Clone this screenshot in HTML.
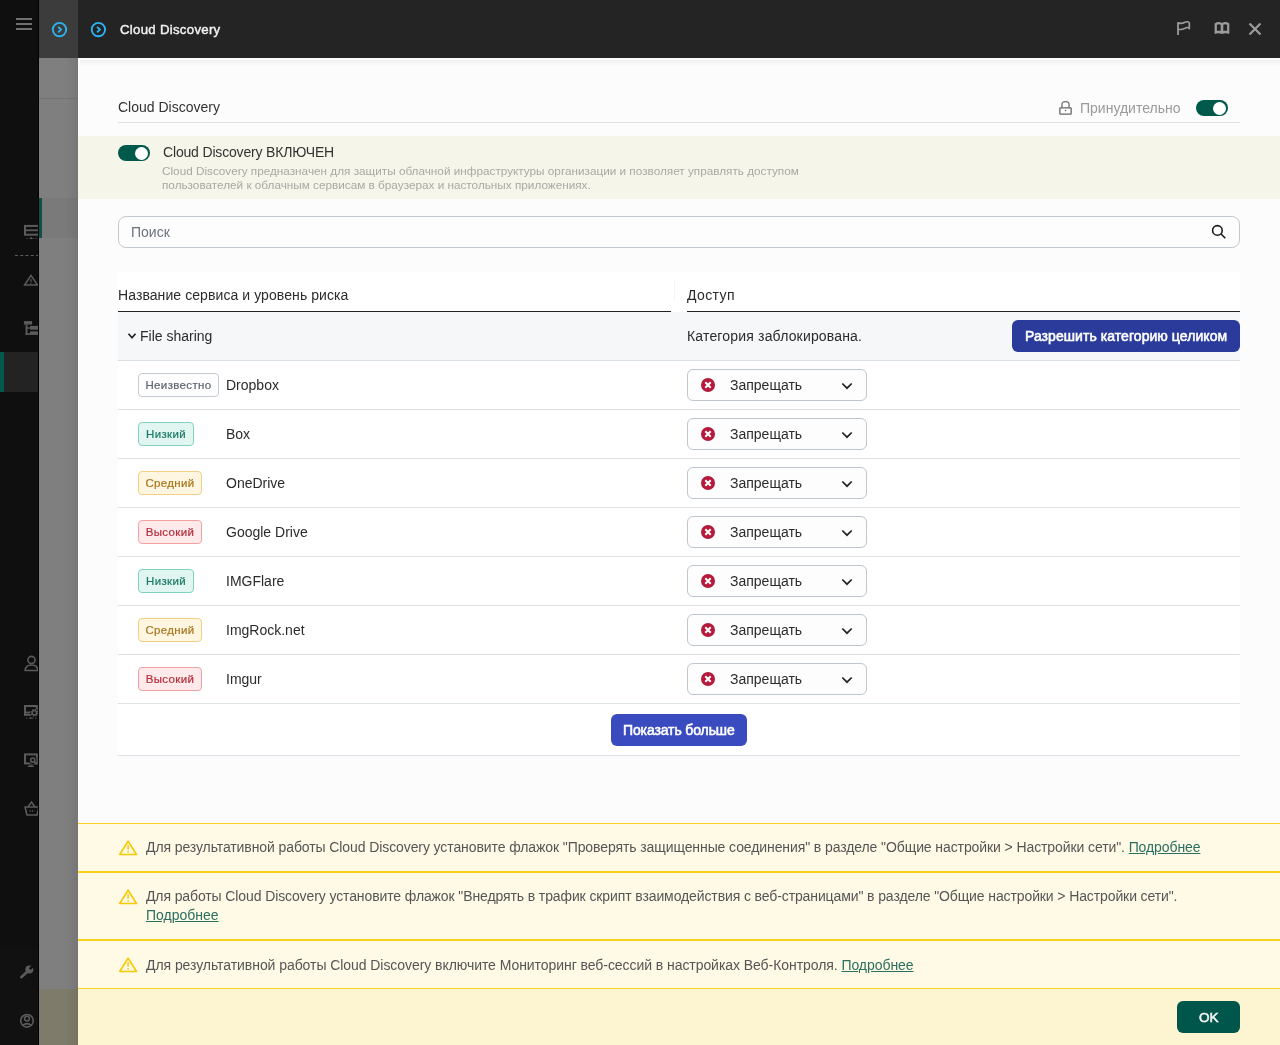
<!DOCTYPE html>
<html><head><meta charset="utf-8">
<style>
*{box-sizing:border-box;margin:0;padding:0}
html,body{width:1280px;height:1045px;overflow:hidden;background:#0f0f0f;font-family:"Liberation Sans",sans-serif;}
.abs{position:absolute}
svg{overflow:visible}
.t{position:absolute;white-space:nowrap;line-height:1;will-change:transform}
</style></head>
<body>
<div class="abs" style="left:0px;top:0px;width:39px;height:1045px;background:#0f0f0f;"></div>
<div class="abs" style="left:0px;top:949px;width:39px;height:96px;background:#111111;"></div>
<div class="abs" style="left:16px;top:18px;width:16px;height:2px;background:#6f6f6f;"></div>
<div class="abs" style="left:16px;top:23px;width:16px;height:2px;background:#6f6f6f;"></div>
<div class="abs" style="left:16px;top:28px;width:16px;height:2px;background:#6f6f6f;"></div>
<div class="abs" style="left:0px;top:352px;width:39px;height:40px;background:#232323;"></div>
<div class="abs" style="left:0px;top:352px;width:4px;height:40px;background:#00594b;"></div>
<div class="abs" style="left:15px;top:255px;width:24px;height:1px;border-top:1px dashed #5a5a5a"></div>
<svg class="abs" style="left:22px;top:222px" width="17" height="18" viewBox="0 0 17 18"><rect x="3" y="3.9" width="13.9" height="8.8" fill="none" stroke="#5b5b5b" stroke-width="2"/><line x1="3" y1="8.3" x2="17" y2="8.3" stroke="#5b5b5b" stroke-width="1.8"/><line x1="4.5" y1="16.5" x2="17" y2="16.5" stroke="#5b5b5b" stroke-width="0.9" stroke-dasharray="1.2 1.8"/><rect x="8.2" y="15.3" width="1.8" height="1.8" fill="#5b5b5b"/></svg>
<svg class="abs" style="left:22px;top:272px" width="17" height="16" viewBox="0 0 17 16"><path d="M9 3.4 L15.5 13.1 L2.6 13.1 Z" fill="none" stroke="#5b5b5b" stroke-width="1.5" stroke-linejoin="miter"/><line x1="9" y1="7" x2="9" y2="10" stroke="#5b5b5b" stroke-width="1.2"/><circle cx="9" cy="11.4" r="0.6" fill="#5b5b5b"/></svg>
<svg class="abs" style="left:22px;top:319px" width="17" height="17" viewBox="0 0 17 17"><rect x="1.9" y="2.1" width="8.2" height="3.5" fill="#5b5b5b"/><rect x="3.6" y="5.6" width="1.9" height="10.3" fill="#5b5b5b"/><rect x="3.6" y="8.3" width="4.4" height="1.4" fill="#5b5b5b"/><rect x="3.6" y="14.2" width="4.4" height="1.7" fill="#5b5b5b"/><rect x="8" y="6.9" width="9" height="3.8" fill="#5b5b5b"/><rect x="8" y="12.4" width="9" height="3.5" fill="#5b5b5b"/></svg>
<svg class="abs" style="left:22px;top:654px" width="17" height="18" viewBox="0 0 17 18"><circle cx="9.5" cy="6" r="3.6" fill="none" stroke="#5b5b5b" stroke-width="1.6"/><path d="M3 16.5 Q3.5 11 9.5 11 Q15.5 11 16 16.5 Z" fill="none" stroke="#5b5b5b" stroke-width="1.6" stroke-linejoin="round"/></svg>
<svg class="abs" style="left:22px;top:702px" width="17" height="18" viewBox="0 0 17 18"><rect x="3" y="4" width="11.8" height="8.8" fill="none" stroke="#5b5b5b" stroke-width="2"/><line x1="2" y1="10.4" x2="9" y2="10.4" stroke="#5b5b5b" stroke-width="1.8"/><circle cx="12.4" cy="10.75" r="4.3" fill="#0f0f0f"/><circle cx="12.4" cy="10.75" r="2.2" fill="none" stroke="#5b5b5b" stroke-width="1.5"/><circle cx="12.4" cy="10.75" r="3.3" fill="none" stroke="#5b5b5b" stroke-width="1.3" stroke-dasharray="1.3 1.3"/><line x1="4" y1="16.1" x2="17" y2="16.1" stroke="#5b5b5b" stroke-width="0.9" stroke-dasharray="1.2 1.8"/><rect x="7.9" y="15.2" width="1.7" height="1.7" fill="#5b5b5b"/></svg>
<svg class="abs" style="left:22px;top:751px" width="17" height="18" viewBox="0 0 17 18"><rect x="3" y="3.4" width="11.8" height="9" fill="none" stroke="#5b5b5b" stroke-width="2"/><circle cx="10.75" cy="9" r="3.9" fill="#0f0f0f"/><circle cx="10.75" cy="9" r="2.1" fill="none" stroke="#5b5b5b" stroke-width="1.5"/><line x1="12.3" y1="10.6" x2="14.9" y2="13.2" stroke="#5b5b5b" stroke-width="1.5"/><path d="M5.4 16.1 L7.2 14.2 H10.5 L12.4 16.1 Z" fill="#5b5b5b"/></svg>
<svg class="abs" style="left:22px;top:799px" width="17" height="18" viewBox="0 0 17 18"><path d="M3 8 H17 L15 16 H5 Z" fill="none" stroke="#5b5b5b" stroke-width="1.6" stroke-linejoin="round"/><path d="M6 8 L9.5 3 L13 8" fill="none" stroke="#5b5b5b" stroke-width="1.5"/><line x1="7.5" y1="12" x2="12.5" y2="12" stroke="#5b5b5b" stroke-width="1.4" stroke-dasharray="1.2 1.2"/></svg>
<svg class="abs" style="left:10px;top:955px" width="30" height="30" viewBox="0 0 30 30"><line x1="11.3" y1="22.2" x2="17.5" y2="16.5" stroke="#5b5b5b" stroke-width="2.6" stroke-linecap="round"/><circle cx="19.3" cy="14.6" r="4" fill="#5b5b5b"/><line x1="19.8" y1="14.1" x2="24.5" y2="9.4" stroke="#0f0f0f" stroke-width="2.6"/></svg>
<svg class="abs" style="left:10px;top:1005px" width="30" height="30" viewBox="0 0 30 30"><circle cx="17" cy="15.8" r="6.3" fill="none" stroke="#5b5b5b" stroke-width="1.6"/><circle cx="17" cy="13.6" r="2.4" fill="none" stroke="#5b5b5b" stroke-width="1.5"/><path d="M12.5 20.5 Q17 16.8 21.5 20.5" fill="none" stroke="#5b5b5b" stroke-width="1.5"/></svg>
<div class="abs" style="left:38px;top:0px;width:1px;height:1045px;background:#000;"></div>
<div class="abs" style="left:39px;top:0px;width:39px;height:1045px;background:#7f7f7f;"></div>
<div class="abs" style="left:39px;top:98px;width:39px;height:1px;background:#747474;"></div>
<div class="abs" style="left:39px;top:198px;width:39px;height:40px;background:#7a7a7a;"></div>
<div class="abs" style="left:39px;top:198px;width:3px;height:40px;background:#0d5045;"></div>
<div class="abs" style="left:39px;top:989px;width:39px;height:56px;background:#7f7b6a;"></div>
<div class="abs" style="left:66px;top:58px;width:12px;height:987px;background:linear-gradient(to right,rgba(0,0,0,0),rgba(0,0,0,0.07))"></div>
<div class="abs" style="left:39px;top:0px;width:39px;height:58px;background:#3c3c3c;"></div>
<svg class="abs" style="left:50px;top:20px" width="18" height="18" viewBox="0 0 18 18"><circle cx="9.5" cy="9.600000000000001" r="6.7" fill="none" stroke="#2bb4f2" stroke-width="1.9"/><path d="M8.2 6.800000000000002 L11.0 9.600000000000001 L8.2 12.400000000000002" fill="none" stroke="#2bb4f2" stroke-width="1.9"/></svg>
<div class="abs" style="left:78px;top:0px;width:1202px;height:58px;background:#242424;"></div>
<svg class="abs" style="left:89px;top:20px" width="18" height="18" viewBox="0 0 18 18"><circle cx="9.400000000000006" cy="9.600000000000001" r="6.7" fill="none" stroke="#2bb4f2" stroke-width="1.9"/><path d="M8.100000000000005 6.800000000000002 L10.900000000000006 9.600000000000001 L8.100000000000005 12.400000000000002" fill="none" stroke="#2bb4f2" stroke-width="1.9"/></svg>
<div class="t" style="left:119.7px;top:23.08px;font-size:13.2px;color:#f0f0f0;font-weight:normal;letter-spacing:0.3px;-webkit-text-stroke:0.45px #f0f0f0;">Cloud Discovery</div>
<svg class="abs" style="left:1172px;top:18px" width="24" height="20" viewBox="0 0 24 20"><path d="M6 16.9 V4.3" stroke="#9c9c9c" stroke-width="1.8" fill="none"/><path d="M6 4.9 C8.5 5.8, 11 5.3, 13 4.3 C14.8 3.5, 16.8 3.4, 17.3 5 V10.6 C16.5 9.1, 14.5 9.3, 13 10.2 C11 11.3, 8.5 11.8, 6 11.3" fill="none" stroke="#9c9c9c" stroke-width="1.7" stroke-linejoin="round"/></svg>
<svg class="abs" style="left:1210px;top:18px" width="24" height="20" viewBox="0 0 24 20"><path fill-rule="evenodd" fill="#9c9c9c" d="M4.6 15.9 V5.4 Q8.5 3 12 5 Q15.5 3 19.3 5.4 V15.9 Q15.5 14.6 12 15.9 Q8.5 14.6 4.6 15.9 Z M6.9 12.8 V6.7 Q8.8 5.9 10.7 6.7 V12.8 Z M13.3 12.8 V6.7 Q15.2 5.9 17.1 6.7 V12.8 Z"/></svg>
<svg class="abs" style="left:1246px;top:20px" width="18" height="18" viewBox="0 0 18 18"><path d="M3.5 3.5 L14.5 14.5 M14.5 3.5 L3.5 14.5" stroke="#9c9c9c" stroke-width="2.2" stroke-linecap="butt"/></svg>
<div class="abs" style="left:78px;top:58px;width:1202px;height:765px;background:#fcfcfc;"></div>
<div class="abs" style="left:80px;top:59px;width:1200px;height:7px;background:linear-gradient(to bottom,rgba(0,0,0,0.0),rgba(0,0,0,0.045) 25%,rgba(0,0,0,0))"></div>
<div class="t" style="left:118px;top:100.20px;font-size:14px;color:#333333;font-weight:normal;">Cloud Discovery</div>
<svg class="abs" style="left:1057px;top:100px" width="18" height="18" viewBox="0 0 18 18"><path d="M4.95 7.8 V4.6 Q4.95 1.55 8.5 1.55 Q12.05 1.55 12.05 4.6 V7.8" fill="none" stroke="#707070" stroke-width="1.3"/><rect x="2.85" y="7.85" width="11.3" height="6.3" rx="0.6" fill="none" stroke="#666" stroke-width="1.3"/><circle cx="8.5" cy="10.5" r="0.75" fill="#666"/></svg>
<div class="t" style="left:1080.3px;top:100.70px;font-size:14px;color:#9a9a9a;font-weight:normal;">Принудительно</div>
<div class="abs" style="left:1196px;top:100px;width:32px;height:16px;border-radius:8px;background:#00594b"></div><div class="abs" style="left:1212.5px;top:101.5px;width:13px;height:13px;border-radius:50%;background:#fff"></div>
<div class="abs" style="left:118px;top:122px;width:1122px;height:1px;background:#e0e0e0;"></div>
<div class="abs" style="left:78px;top:136px;width:1202px;height:63px;background:#f6f5e9;"></div>
<div class="abs" style="left:118px;top:145px;width:32px;height:16px;border-radius:8px;background:#00594b"></div><div class="abs" style="left:134.5px;top:146.5px;width:13px;height:13px;border-radius:50%;background:#fff"></div>
<div class="t" style="left:162.5px;top:145.10px;font-size:14px;color:#333333;font-weight:normal;letter-spacing:-0.17px;">Cloud Discovery ВКЛЮЧЕН</div>
<div class="t" style="left:162px;top:165.31px;font-size:11.75px;color:#a9a9a4;font-weight:normal;">Cloud Discovery предназначен для защиты облачной инфраструктуры организации и позволяет управлять доступом</div>
<div class="t" style="left:162px;top:179.21px;font-size:11.75px;color:#a9a9a4;font-weight:normal;">пользователей к облачным сервисам в браузерах и настольных приложениях.</div>
<div class="abs" style="left:118px;top:216px;width:1122px;height:32px;border:1px solid #c3c9d0;border-radius:8px;background:#fdfdfd"></div>
<div class="t" style="left:131px;top:225.10px;font-size:14px;color:#6b737c;font-weight:normal;">Поиск</div>
<svg class="abs" style="left:1209px;top:222px" width="20" height="20" viewBox="0 0 20 20"><circle cx="8.4" cy="8.4" r="4.8" fill="none" stroke="#1a1a1a" stroke-width="1.6"/><line x1="11.8" y1="11.8" x2="16.3" y2="16.3" stroke="#1a1a1a" stroke-width="1.6"/></svg>
<div class="abs" style="left:118px;top:272px;width:1122px;height:483px;background:#ffffff;"></div>
<div class="t" style="left:118px;top:288.40px;font-size:14px;color:#2b2b2b;font-weight:normal;letter-spacing:0.08px;">Название сервиса и уровень риска</div>
<div class="t" style="left:686.5px;top:288.40px;font-size:14px;color:#2b2b2b;font-weight:normal;letter-spacing:0.4px;">Доступ</div>
<div class="abs" style="left:674px;top:280px;width:1px;height:20px;background:#f4f4f4;"></div>
<div class="abs" style="left:118px;top:311px;width:553px;height:1px;background:#222;"></div>
<div class="abs" style="left:687px;top:311px;width:553px;height:1px;background:#222;"></div>
<div class="abs" style="left:118px;top:312px;width:1122px;height:48px;background:#f6f7f9;"></div>
<div class="abs" style="left:118px;top:360px;width:1122px;height:1px;background:#d9dee5;"></div>
<svg class="abs" style="left:126px;top:330px" width="12" height="12" viewBox="0 0 12 12"><path d="M2.5 3.8 L6 7.8 L9.5 3.8" fill="none" stroke="#222" stroke-width="1.7"/></svg>
<div class="t" style="left:139.7px;top:328.90px;font-size:14px;color:#2b2b2b;font-weight:normal;">File sharing</div>
<div class="t" style="left:686.8px;top:328.60px;font-size:14px;color:#2b2b2b;font-weight:normal;letter-spacing:0.17px;">Категория заблокирована.</div>
<div class="abs" style="left:1012px;top:320px;width:228px;height:32px;border-radius:6px;background:#2a3b9b"></div>
<div class="t" style="left:1024.5px;top:329.30px;font-size:14px;color:#ffffff;font-weight:normal;letter-spacing:0.06px;-webkit-text-stroke:0.55px #fff;">Разрешить категорию целиком</div>
<div class="abs" style="left:138px;top:373px;width:81px;height:24px;border:1px solid #c5cbd3;border-radius:4px;background:#fdfdfd;color:#5f6670;font-size:11.5px;font-weight:normal;line-height:22px;text-align:center;letter-spacing:0.35px;-webkit-text-stroke:0.2px #5f6670;will-change:transform">Неизвестно</div>
<div class="t" style="left:225.8px;top:377.50px;font-size:14px;color:#2b2b2b;font-weight:normal;">Dropbox</div>
<div class="abs" style="left:687px;top:369px;width:180px;height:32px;border:1px solid #bfc5cc;border-radius:6px;background:#fdfdfd"></div>
<svg class="abs" style="left:700px;top:377px" width="16" height="16" viewBox="0 0 16 16"><circle cx="8" cy="8" r="7" fill="#b51a3c"/><path d="M5.3 5.3 L10.7 10.7 M10.7 5.3 L5.3 10.7" stroke="#fff" stroke-width="2"/></svg>
<div class="t" style="left:730.3px;top:378.10px;font-size:14px;color:#2b2b2b;font-weight:normal;">Запрещать</div>
<svg class="abs" style="left:840px;top:378.5px" width="14" height="14" viewBox="0 0 14 14"><path d="M2.3 4.5 L7 9.2 L11.7 4.5" fill="none" stroke="#222" stroke-width="1.7"/></svg>
<div class="abs" style="left:118px;top:409px;width:1122px;height:1px;background:#dde2e8;"></div>
<div class="abs" style="left:138px;top:422px;width:56px;height:24px;border:1px solid #7fd3be;border-radius:4px;background:#e2f6f1;color:#1c7a66;font-size:11.5px;font-weight:normal;line-height:22px;text-align:center;letter-spacing:0.35px;-webkit-text-stroke:0.2px #1c7a66;will-change:transform">Низкий</div>
<div class="t" style="left:225.8px;top:426.50px;font-size:14px;color:#2b2b2b;font-weight:normal;">Box</div>
<div class="abs" style="left:687px;top:418px;width:180px;height:32px;border:1px solid #bfc5cc;border-radius:6px;background:#fdfdfd"></div>
<svg class="abs" style="left:700px;top:426px" width="16" height="16" viewBox="0 0 16 16"><circle cx="8" cy="8" r="7" fill="#b51a3c"/><path d="M5.3 5.3 L10.7 10.7 M10.7 5.3 L5.3 10.7" stroke="#fff" stroke-width="2"/></svg>
<div class="t" style="left:730.3px;top:427.10px;font-size:14px;color:#2b2b2b;font-weight:normal;">Запрещать</div>
<svg class="abs" style="left:840px;top:427.5px" width="14" height="14" viewBox="0 0 14 14"><path d="M2.3 4.5 L7 9.2 L11.7 4.5" fill="none" stroke="#222" stroke-width="1.7"/></svg>
<div class="abs" style="left:118px;top:458px;width:1122px;height:1px;background:#dde2e8;"></div>
<div class="abs" style="left:138px;top:471px;width:64px;height:24px;border:1px solid #f1d083;border-radius:4px;background:#fff6e1;color:#a8761c;font-size:11.5px;font-weight:normal;line-height:22px;text-align:center;letter-spacing:0.35px;-webkit-text-stroke:0.2px #a8761c;will-change:transform">Средний</div>
<div class="t" style="left:225.8px;top:475.50px;font-size:14px;color:#2b2b2b;font-weight:normal;">OneDrive</div>
<div class="abs" style="left:687px;top:467px;width:180px;height:32px;border:1px solid #bfc5cc;border-radius:6px;background:#fdfdfd"></div>
<svg class="abs" style="left:700px;top:475px" width="16" height="16" viewBox="0 0 16 16"><circle cx="8" cy="8" r="7" fill="#b51a3c"/><path d="M5.3 5.3 L10.7 10.7 M10.7 5.3 L5.3 10.7" stroke="#fff" stroke-width="2"/></svg>
<div class="t" style="left:730.3px;top:476.10px;font-size:14px;color:#2b2b2b;font-weight:normal;">Запрещать</div>
<svg class="abs" style="left:840px;top:476.5px" width="14" height="14" viewBox="0 0 14 14"><path d="M2.3 4.5 L7 9.2 L11.7 4.5" fill="none" stroke="#222" stroke-width="1.7"/></svg>
<div class="abs" style="left:118px;top:507px;width:1122px;height:1px;background:#dde2e8;"></div>
<div class="abs" style="left:138px;top:520px;width:64px;height:24px;border:1px solid #f4a1a4;border-radius:4px;background:#feeaea;color:#b52f3d;font-size:11.5px;font-weight:normal;line-height:22px;text-align:center;letter-spacing:0.35px;-webkit-text-stroke:0.2px #b52f3d;will-change:transform">Высокий</div>
<div class="t" style="left:225.8px;top:524.50px;font-size:14px;color:#2b2b2b;font-weight:normal;">Google Drive</div>
<div class="abs" style="left:687px;top:516px;width:180px;height:32px;border:1px solid #bfc5cc;border-radius:6px;background:#fdfdfd"></div>
<svg class="abs" style="left:700px;top:524px" width="16" height="16" viewBox="0 0 16 16"><circle cx="8" cy="8" r="7" fill="#b51a3c"/><path d="M5.3 5.3 L10.7 10.7 M10.7 5.3 L5.3 10.7" stroke="#fff" stroke-width="2"/></svg>
<div class="t" style="left:730.3px;top:525.10px;font-size:14px;color:#2b2b2b;font-weight:normal;">Запрещать</div>
<svg class="abs" style="left:840px;top:525.5px" width="14" height="14" viewBox="0 0 14 14"><path d="M2.3 4.5 L7 9.2 L11.7 4.5" fill="none" stroke="#222" stroke-width="1.7"/></svg>
<div class="abs" style="left:118px;top:556px;width:1122px;height:1px;background:#dde2e8;"></div>
<div class="abs" style="left:138px;top:569px;width:56px;height:24px;border:1px solid #7fd3be;border-radius:4px;background:#e2f6f1;color:#1c7a66;font-size:11.5px;font-weight:normal;line-height:22px;text-align:center;letter-spacing:0.35px;-webkit-text-stroke:0.2px #1c7a66;will-change:transform">Низкий</div>
<div class="t" style="left:225.8px;top:573.50px;font-size:14px;color:#2b2b2b;font-weight:normal;">IMGFlare</div>
<div class="abs" style="left:687px;top:565px;width:180px;height:32px;border:1px solid #bfc5cc;border-radius:6px;background:#fdfdfd"></div>
<svg class="abs" style="left:700px;top:573px" width="16" height="16" viewBox="0 0 16 16"><circle cx="8" cy="8" r="7" fill="#b51a3c"/><path d="M5.3 5.3 L10.7 10.7 M10.7 5.3 L5.3 10.7" stroke="#fff" stroke-width="2"/></svg>
<div class="t" style="left:730.3px;top:574.10px;font-size:14px;color:#2b2b2b;font-weight:normal;">Запрещать</div>
<svg class="abs" style="left:840px;top:574.5px" width="14" height="14" viewBox="0 0 14 14"><path d="M2.3 4.5 L7 9.2 L11.7 4.5" fill="none" stroke="#222" stroke-width="1.7"/></svg>
<div class="abs" style="left:118px;top:605px;width:1122px;height:1px;background:#dde2e8;"></div>
<div class="abs" style="left:138px;top:618px;width:64px;height:24px;border:1px solid #f1d083;border-radius:4px;background:#fff6e1;color:#a8761c;font-size:11.5px;font-weight:normal;line-height:22px;text-align:center;letter-spacing:0.35px;-webkit-text-stroke:0.2px #a8761c;will-change:transform">Средний</div>
<div class="t" style="left:225.8px;top:622.50px;font-size:14px;color:#2b2b2b;font-weight:normal;">ImgRock.net</div>
<div class="abs" style="left:687px;top:614px;width:180px;height:32px;border:1px solid #bfc5cc;border-radius:6px;background:#fdfdfd"></div>
<svg class="abs" style="left:700px;top:622px" width="16" height="16" viewBox="0 0 16 16"><circle cx="8" cy="8" r="7" fill="#b51a3c"/><path d="M5.3 5.3 L10.7 10.7 M10.7 5.3 L5.3 10.7" stroke="#fff" stroke-width="2"/></svg>
<div class="t" style="left:730.3px;top:623.10px;font-size:14px;color:#2b2b2b;font-weight:normal;">Запрещать</div>
<svg class="abs" style="left:840px;top:623.5px" width="14" height="14" viewBox="0 0 14 14"><path d="M2.3 4.5 L7 9.2 L11.7 4.5" fill="none" stroke="#222" stroke-width="1.7"/></svg>
<div class="abs" style="left:118px;top:654px;width:1122px;height:1px;background:#dde2e8;"></div>
<div class="abs" style="left:138px;top:667px;width:64px;height:24px;border:1px solid #f4a1a4;border-radius:4px;background:#feeaea;color:#b52f3d;font-size:11.5px;font-weight:normal;line-height:22px;text-align:center;letter-spacing:0.35px;-webkit-text-stroke:0.2px #b52f3d;will-change:transform">Высокий</div>
<div class="t" style="left:225.8px;top:671.50px;font-size:14px;color:#2b2b2b;font-weight:normal;">Imgur</div>
<div class="abs" style="left:687px;top:663px;width:180px;height:32px;border:1px solid #bfc5cc;border-radius:6px;background:#fdfdfd"></div>
<svg class="abs" style="left:700px;top:671px" width="16" height="16" viewBox="0 0 16 16"><circle cx="8" cy="8" r="7" fill="#b51a3c"/><path d="M5.3 5.3 L10.7 10.7 M10.7 5.3 L5.3 10.7" stroke="#fff" stroke-width="2"/></svg>
<div class="t" style="left:730.3px;top:672.10px;font-size:14px;color:#2b2b2b;font-weight:normal;">Запрещать</div>
<svg class="abs" style="left:840px;top:672.5px" width="14" height="14" viewBox="0 0 14 14"><path d="M2.3 4.5 L7 9.2 L11.7 4.5" fill="none" stroke="#222" stroke-width="1.7"/></svg>
<div class="abs" style="left:118px;top:703px;width:1122px;height:1px;background:#dde2e8;"></div>
<div class="abs" style="left:611px;top:714px;width:136px;height:32px;border-radius:6px;background:#3a4bbf"></div>
<div class="t" style="left:623px;top:723.30px;font-size:14px;color:#ffffff;font-weight:normal;letter-spacing:-0.12px;-webkit-text-stroke:0.55px #fff;">Показать больше</div>
<div class="abs" style="left:118px;top:755px;width:1122px;height:1px;background:#dde2e8;"></div>
<div class="abs" style="left:78px;top:823px;width:1202px;height:222px;background:#fdf5d2;"></div>
<div class="abs" style="left:78px;top:823px;width:1202px;height:49px;background:#fffae6;border-top:1px solid #f8d11f;border-bottom:1px solid #f8d11f"></div>
<div class="abs" style="left:78px;top:872px;width:1202px;height:68px;background:#fffae6;border-top:1px solid #f8d11f;border-bottom:1px solid #f8d11f"></div>
<div class="abs" style="left:78px;top:940px;width:1202px;height:49px;background:#fffae6;border-top:1px solid #f8d11f;border-bottom:1px solid #f8d11f"></div>
<svg class="abs" style="left:117.5px;top:839px" width="20" height="18" viewBox="0 0 20 18"><path d="M10.1 2.2 L18.5 15.5 L1.7 15.5 Z" fill="none" stroke="#f8c800" stroke-width="1.6" stroke-linejoin="round"/><line x1="10.1" y1="6.3" x2="10.1" y2="10.8" stroke="#f8c800" stroke-width="1.5"/><rect x="9.35" y="12" width="1.5" height="1.5" fill="#f8c800"/></svg>
<svg class="abs" style="left:117.5px;top:888px" width="20" height="18" viewBox="0 0 20 18"><path d="M10.1 2.2 L18.5 15.5 L1.7 15.5 Z" fill="none" stroke="#f8c800" stroke-width="1.6" stroke-linejoin="round"/><line x1="10.1" y1="6.3" x2="10.1" y2="10.8" stroke="#f8c800" stroke-width="1.5"/><rect x="9.35" y="12" width="1.5" height="1.5" fill="#f8c800"/></svg>
<svg class="abs" style="left:117.5px;top:956px" width="20" height="18" viewBox="0 0 20 18"><path d="M10.1 2.2 L18.5 15.5 L1.7 15.5 Z" fill="none" stroke="#f8c800" stroke-width="1.6" stroke-linejoin="round"/><line x1="10.1" y1="6.3" x2="10.1" y2="10.8" stroke="#f8c800" stroke-width="1.5"/><rect x="9.35" y="12" width="1.5" height="1.5" fill="#f8c800"/></svg>
<div class="t" style="left:146.4px;top:840.30px;font-size:14px;color:#555555;font-weight:normal;letter-spacing:-0.095px;">Для результативной работы Cloud Discovery установите флажок "Проверять защищенные соединения" в разделе "Общие настройки &gt; Настройки сети". <span style="color:#2b6f61;text-decoration:underline">Подробнее</span></div>
<div class="t" style="left:146.4px;top:889.10px;font-size:14px;color:#555555;font-weight:normal;letter-spacing:-0.11px;">Для работы Cloud Discovery установите флажок "Внедрять в трафик скрипт взаимодействия с веб-страницами" в разделе "Общие настройки &gt; Настройки сети".</div>
<div class="t" style="left:146.4px;top:907.50px;font-size:14px;color:#555555;font-weight:normal;"><span style="color:#2b6f61;text-decoration:underline">Подробнее</span></div>
<div class="t" style="left:146.4px;top:957.80px;font-size:14px;color:#555555;font-weight:normal;letter-spacing:-0.06px;">Для результативной работы Cloud Discovery включите Мониторинг веб-сессий в настройках Веб-Контроля. <span style="color:#2b6f61;text-decoration:underline">Подробнее</span></div>
<div class="abs" style="left:1177px;top:1001px;width:63px;height:32px;border-radius:6px;background:#00564a"></div>
<div class="t" style="left:1199px;top:1010.52px;font-size:13.5px;color:#f6f6f6;font-weight:normal;-webkit-text-stroke:0.55px #f6f6f6;">OK</div>
</body></html>
